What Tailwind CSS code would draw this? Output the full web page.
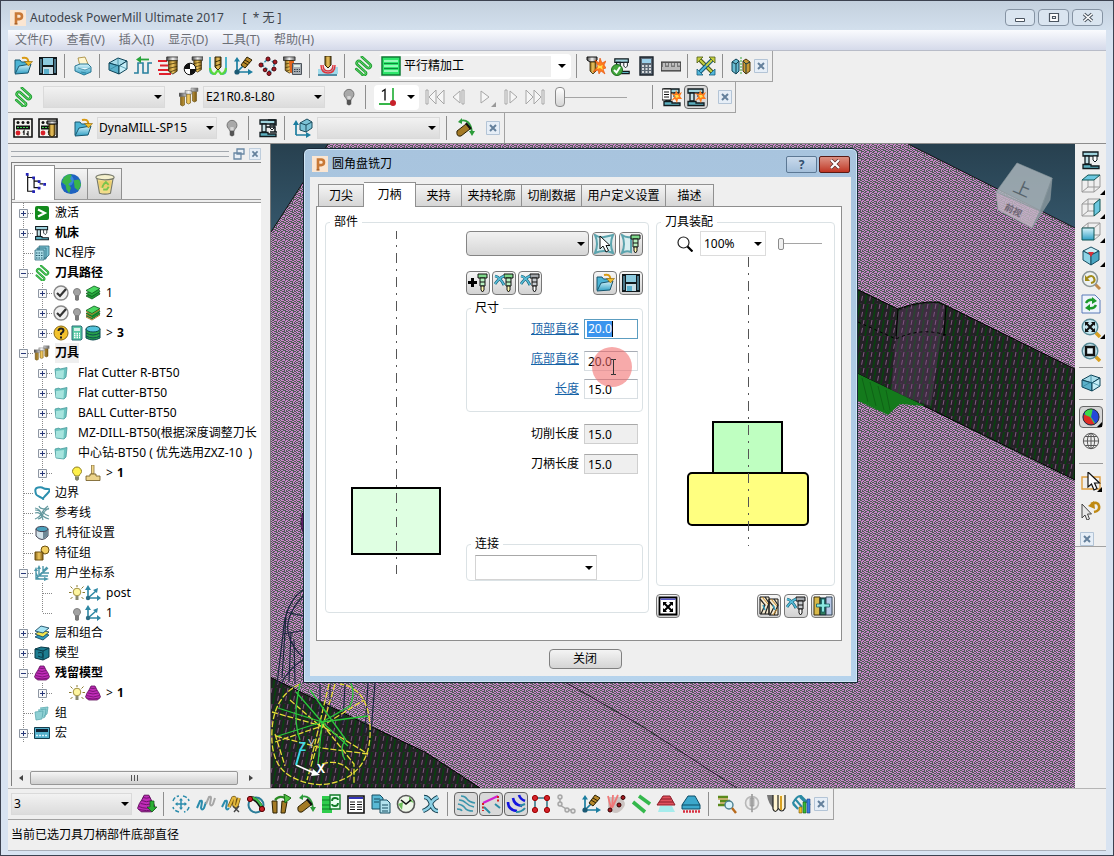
<!DOCTYPE html>
<html lang="zh-CN">
<head>
<meta charset="utf-8">
<title>Autodesk PowerMill Ultimate 2017</title>
<script src="https://cdn.jsdelivr.net/npm/@tailwindcss/browser@4"></script>
</head>
<body class="relative flex h-screen flex-col overflow-hidden border border-[#3c4250] bg-[#d8e3f1] font-['Noto_Sans','Noto_Sans_CJK_SC',sans-serif] text-xs text-black">

<svg class="absolute size-0" aria-hidden="true">
  <defs>
    <linearGradient id="blue" x1="0" y1="0" x2="0" y2="1"><stop offset="0" stop-color="#d8f4fb"/><stop offset="1" stop-color="#2f9fc4"/></linearGradient>
    <linearGradient id="gold" x1="0" y1="0" x2="1" y2="0"><stop offset="0" stop-color="#8a661a"/><stop offset=".5" stop-color="#f0c860"/><stop offset="1" stop-color="#7b5814"/></linearGradient>
    <linearGradient id="steel" x1="0" y1="0" x2="1" y2="0"><stop offset="0" stop-color="#444"/><stop offset=".5" stop-color="#f4f4f4"/><stop offset="1" stop-color="#666"/></linearGradient>
  </defs>
  <symbol id="i-p" viewBox="0 0 16 16"><path fill="#fbe6d2" d="M0 0h16v16H0z"/><path fill="none" stroke="#c87836" stroke-width="2.600" d="M6 14V3.500h3.200a2.800 2.800 0 0 1 0 5.600H6"/><path stroke="#8c4a18" d="M4.500 14h3"/></symbol>
  <symbol id="i-open" viewBox="0 0 20 20"><path fill="#4db4d4" stroke="#17566f" d="M2 17V4h5l1.500 2H14v4"/><path fill="url(#blue)" stroke="#17566f" d="M2 18l4-8 12-2-3 9z"/><path fill="none" stroke="#d99a12" stroke-width="2" d="M9 2c4-1 6 0 6.500 4"/><path fill="#f0bc28" stroke="#8a6208" stroke-width=".6" d="M11.500 5.500h8l-4 4.500z"/></symbol>
  <symbol id="i-save" viewBox="0 0 20 20"><path fill="#10181c" d="M1 1h18v18H1z"/><path fill="#8ccbe0" d="M5 2h10v7H5z"/><path fill="#c4dce6" d="M5 11h10v7H5z"/><path fill="#4a7688" d="M2 3h2v14H2zM16 3h2v14h-2z"/><path fill="#5ab0cc" d="M6 13h5v5H6z"/></symbol>
  <symbol id="i-print" viewBox="0 0 20 20"><path fill="#fff6cf" stroke="#a08330" stroke-width=".8" d="M5 2l7-1 3 7-8 2z"/><path fill="url(#blue)" stroke="#2a7894" d="M2 10l5-2h8l3 3v5l-7 3-9-4z"/><path fill="#e8f9ff" stroke="#2a7894" stroke-width=".7" d="M5 12l7 2 5-2M8 16l5 1"/></symbol>
  <symbol id="i-block" viewBox="0 0 20 20"><path fill="#a8dcea" stroke="#0d4357" d="M1 7l9-5 9 3-8 5z"/><path fill="#5ab0ca" stroke="#0d4357" d="M1 7l10 3v8L1 14z"/><path fill="#c6eef8" stroke="#0d4357" d="M11 10l8-5v8l-8 5z"/><path fill="none" stroke="#2d7c94" stroke-width=".7" d="M1 14l9-5 9 4M10 2v7"/></symbol>
  <symbol id="i-rapid" viewBox="0 0 20 20"><path fill="none" stroke="#28809e" stroke-width="1.600" d="M1 17h4V7h5v10h5V7h4"/><path fill="none" stroke="#28a43a" stroke-width="1.800" d="M16 3.500H6"/><path fill="#28a43a" d="M3 3.500l5-3.500v7z"/></symbol>
  <symbol id="i-tool" viewBox="0 0 20 20"><path fill="url(#steel)" stroke="#222" stroke-width=".8" d="M6 1h13v4H6z"/><path fill="url(#gold)" stroke="#2d2204" stroke-width=".8" d="M8 5h9v11l-4.500 3-4.500-3z"/><path stroke="#3d2f08" stroke-width=".8" d="M8 9l9-2M8 13l9-2M9 17l8-3"/></symbol>
  <symbol id="i-feed" viewBox="0 0 20 20"><path stroke="#e0202c" stroke-width="1.800" d="M0 5h9M2 9.500h8M0 14h11M1 18h12"/><use href="#i-tool" x="3" y="0" width="19" height="19"/></symbol>
  <symbol id="i-point" viewBox="0 0 20 20"><use href="#i-tool" x="4" y="0" width="17" height="17"/><circle cx="7" cy="13" r="5.800" fill="#fff" stroke="#111"/><path fill="#111" d="M7 13V7.200A5.800 5.800 0 0 0 1.200 13zM7 13v5.800a5.800 5.800 0 0 0 5.800-5.800z"/></symbol>
  <symbol id="i-lead" viewBox="0 0 20 20"><path fill="none" stroke="#3aaec8" stroke-width="1.800" d="M2 1v13q0 4 4 4M18 1v13q0 4-4 4"/><path fill="none" stroke="#58d83c" stroke-width="2.200" d="M2 12q1 6 5 6l3-4 3 4q4 0 5-6"/><path fill="url(#gold)" stroke="#2d2204" d="M7 1h6v10l-3 3-3-3z"/><path stroke="#3d2f08" d="M7 6l6-2M7 10l6-2"/></symbol>
  <symbol id="i-axis" viewBox="0 0 20 20"><path fill="none" stroke="#1c7ea0" stroke-width="1.700" d="M4 17V4M4 16h14M4 16l6-6"/><path fill="#1c7ea0" d="M1 5.500L4 1l3 4.500zM15 13l5 3-5 3z"/><circle cx="4" cy="16" r="2.600" fill="#1c5a74"/><path fill="#b8892a" stroke="#2d2204" d="M8 9l6-8 5 3-7 8z"/><path stroke="#2d2204" d="M10 6l5 3M12 4l5 3"/></symbol>
  <symbol id="i-chain" viewBox="0 0 20 20"><path fill="none" stroke="#3a9ab4" stroke-width="1.500" stroke-dasharray="3 1.500" d="M3 9l7-6 7 4-4 9-9-7"/><g fill="#a81820" stroke="#4a0810"><circle cx="10" cy="3" r="2"/><circle cx="17" cy="6" r="2"/><circle cx="3" cy="9" r="2"/><circle cx="16" cy="13" r="2"/><circle cx="11" cy="17.500" r="2"/><circle cx="7" cy="14" r="1.800"/></g></symbol>
  <symbol id="i-feedcalc" viewBox="0 0 20 20"><use href="#i-tool" x="-5" y="0" width="18" height="18"/><path fill="#e2641c" d="M6 5h5l-1 13-3-2z"/><path fill="#a7adb3" stroke="#4c535a" d="M9.500 7.500h9v11h-9z"/><path fill="#dfeee4" d="M11 9h6v2h-6z"/><path stroke="#39424a" stroke-dasharray="1.500 1" d="M11 13.500h6M11 15.500h6"/></symbol>
  <symbol id="i-collide" viewBox="0 0 20 20"><path fill="#9fdaea" d="M0 13h7q3 6 8-2h5v7H0z"/><path fill="none" stroke="#e0343c" stroke-width="1.400" d="M5 9q0 6 5 6t5-6M3 9q0 8 7 8t7-8"/><path fill="url(#gold)" stroke="#2d2204" d="M7 0h6v9l-3 3-3-3z"/><path stroke="#1c6e8c" stroke-width="1.500" d="M0 19h19"/></symbol>
  <symbol id="i-path" viewBox="0 0 20 20"><g fill="none" stroke-linecap="round" transform="rotate(42 10 10)"><path stroke="#1f9a32" stroke-width="2.600" d="M3 4h11a2.200 2.200 0 0 1 0 4.400H5a2.200 2.200 0 0 0 0 4.400h11M7 16.800h8a2 2 0 0 0 1-4"/><path stroke="#62de6a" stroke-width=".9" d="M3 4h11a2.200 2.200 0 0 1 0 4.400H5a2.200 2.200 0 0 0 0 4.400h11M7 16.800h8a2 2 0 0 0 1-4"/></g></symbol>
  <symbol id="i-raster" viewBox="0 0 20 20"><path fill="#2ee66c" stroke="#0f7c34" stroke-width="1.500" d="M1 1h18v18H1z"/><path fill="none" stroke="#b8ffd0" stroke-width="1.400" d="M3 5h14M3 10h14M3 15h14"/><path fill="none" stroke="#0c8a3a" d="M3 7.500h14M3 12.500h14"/></symbol>
  <symbol id="i-boom" viewBox="0 0 20 20"><path fill="url(#steel)" stroke="#111" d="M1 1h10v3L9 6H4L1 4z"/><path fill="url(#gold)" stroke="#2d2204" stroke-width=".8" d="M4 6h6v9l-3 3-3-3z"/><path fill="#ff7b1c" stroke="#e04c08" stroke-width=".6" d="M12 10L9 4l4 3 1-5 2 5 4-2-2 4 2 3-3 1 2 5-4-3-2 3-1-4-5 2z"/><path fill="#ffe04c" d="M12 9l2 1 3-1-1 2 1 3-3-2-3 1 1-2z"/></symbol>
  <symbol id="i-machine" viewBox="0 0 20 20"><path fill="#9fd3dd" stroke="#101a1e" stroke-width="1.300" d="M2 2h15v4H2z"/><path fill="#c8e4ea" stroke="#101a1e" stroke-width="1.300" d="M4 6h4v8H4z"/><path fill="#fff" stroke="#101a1e" d="M12 6h4v4l-2 2-2-2z"/><path fill="#5cb0c0" stroke="#101a1e" stroke-width="1.300" d="M2 18.500v-4h8v1.500h8v2.500z"/></symbol>
  <symbol id="i-machok" viewBox="0 0 20 20"><use href="#i-machine" x="2" width="18" height="20"/><circle cx="6" cy="14" r="5.500" fill="#42a83c" stroke="#1e6a1c"/><path fill="none" stroke="#fff" stroke-width="2" d="M3 14l2.500 2.500L9 11"/></symbol>
  <symbol id="i-calc" viewBox="0 0 20 20"><path fill="#5c6874" stroke="#1c242c" stroke-width="1.400" d="M4 1h13v18H4z"/><path fill="#9bd0ea" d="M6 3h9v4H6z"/><path stroke="#fff" stroke-width="1.700" stroke-dasharray="2 1.500" d="M6 10h9M6 13h9M6 16h9"/></symbol>
  <symbol id="i-ruler" viewBox="0 0 20 20"><path fill="#777" stroke="#333" d="M0 6h20v9H0z"/><path fill="#b9b9b9" d="M1 11h18v3H1z"/><path stroke="#eee" stroke-width="1.200" d="M3 7v4M6 7v2.500M9 7v4M12 7v2.500M15 7v4M18 7v2.500"/></symbol>
  <symbol id="i-cross" viewBox="0 0 20 20"><path stroke="#4b5a18" stroke-width="4" d="M4 4l12 12"/><path stroke="#c6d040" stroke-width="2" d="M3 3l14 14"/><path stroke="#155a78" stroke-width="4" d="M16 4L4 16"/><path stroke="#53b8dc" stroke-width="2" d="M10 10l-7 7"/><path stroke="#c6d040" stroke-width="2" d="M17 3l-7 7"/><path fill="#c6d040" stroke="#4b5a18" stroke-width=".8" d="M1 1h6L1 7zM19 1v6l-6-6z"/><path fill="#53b8dc" stroke="#155a78" stroke-width=".8" d="M1 19v-6l6 6zM19 19h-6l6-6z"/></symbol>
  <symbol id="i-mirror" viewBox="0 0 20 20"><path fill="#69bcd2" stroke="#0d4357" d="M1 6l4-3 3 2v10l-3 3-4-3z"/><path fill="#c99a34" stroke="#4c360a" d="M12 5l3-2 4 3v9l-4 3-3-3z"/><path fill="none" stroke="#173b46" d="M5 8v9M1 6l4 2 3-3M15 8v9M12 5l3 3 4-2"/><path stroke="#37a83c" stroke-dasharray="2 1" d="M10 1v18"/></symbol>
  <symbol id="i-bulb" viewBox="0 0 20 20"><path fill="#a9a9a9" stroke="#6d6d6d" d="M7.500 13C7 11 4.500 10 4.500 7a5.500 5.500 0 0 1 11 0c0 3-2.500 4-3 6z"/><path fill="#555" d="M7.500 13h5v5l-2.500 1.500L7.500 18z"/><path stroke="#fff" d="M9 13V9M11 13V9"/></symbol>
  <symbol id="i-bulbsm" viewBox="0 0 16 16"><path fill="#a2a2a2" stroke="#808080" d="M6 10.500C5.500 9 4.500 8.500 4.500 7a3.500 3.500 0 0 1 7 0c0 1.500-1 2-1.500 3.500z"/><path fill="#7a7a7a" d="M6 11h4v4l-2 1-2-1z"/></symbol>
  <symbol id="i-bulbon" viewBox="0 0 16 16"><path fill="#fff04a" stroke="#8d7d20" d="M6 11C5.500 9 3.500 8.500 3.500 6.500a4.500 4.500 0 0 1 9 0c0 2-2 2.500-2.500 4.500z"/><path fill="#85856c" d="M6 11.500h4v3L8 16l-2-1.500z"/></symbol>
  <symbol id="i-sun" viewBox="0 0 16 16"><path stroke="#8a7a30" d="M8 0v2M1.500 1.500l2 2M14.500 1.500l-2 2M0 7.500h2.500M13.500 7.500H16M1.500 14l2-2M14.500 14l-2-2"/><circle cx="8" cy="7" r="3.800" fill="#fff6a0" stroke="#a09040"/><path fill="#8a8a70" d="M6.500 11h3v4h-3z"/></symbol>
  <symbol id="i-tools3" viewBox="0 0 20 20"><g fill="url(#gold)" stroke="#6c500f" stroke-width=".6"><path d="M1.500 9h4v9L3.500 19l-2-1zM7.500 7h4v9l-2 1-2-1zM13.500 4h4v10l-2 1-2-1z"/></g><g fill="url(#steel)" stroke="#777" stroke-width=".5"><path d="M0 6h7v3.500H0zM6 3.500h7V7H6zM12 1h7v3.500h-7z"/></g></symbol>
  <symbol id="i-one" viewBox="0 0 20 20"><path fill="none" stroke="#35b648" stroke-width="1.800" d="M15 1v16H1"/><circle cx="15" cy="16" r="3" fill="#c8202a"/><path fill="none" stroke="#111" stroke-width="1.400" d="M4 4.500L7 2.500v11"/></symbol>
  <symbol id="i-ctl" viewBox="0 0 20 20"><path fill="#f3f3ee" stroke="#111" stroke-width="1.600" d="M1 1h18v18H1z"/><g fill="#111"><circle cx="5" cy="4.500" r="1.500"/><circle cx="10" cy="4.500" r="1.500"/><circle cx="15" cy="4.500" r="1.500"/><path d="M3 7.500h14v4H3z"/></g><path stroke="#3bd04c" stroke-dasharray="2 1" d="M4 9.500h12"/><circle cx="5" cy="15" r="2.400" fill="#d82028"/><path fill="none" stroke="#111" stroke-width="1.200" d="M11 17v-4l-1 1.500M15 13v4l-1.500-1.500"/></symbol>
  <symbol id="i-ctltool" viewBox="0 0 20 20"><use href="#i-ctl"/><path fill="url(#gold)" stroke="#2d2204" d="M11 6h6v11l-3 2-3-2z"/><path fill="url(#steel)" stroke="#111" d="M9 3h10v3H9z"/></symbol>
  <symbol id="i-mach2" viewBox="0 0 20 20"><use href="#i-machine"/><path fill="none" stroke="#101a1e" stroke-width="1.500" d="M10 2h8v5h-6M8 9h9v5M12 14h7"/></symbol>
  <symbol id="i-wpbox" viewBox="0 0 20 20"><path fill="none" stroke="#1c7ea0" stroke-width="1.700" d="M3 17V6M3 17h12"/><path fill="#1c7ea0" d="M0 7l3-5 3 5zM13 14l5 3-5 3z"/><path fill="#7cc3d6" stroke="#1d4d5e" d="M7 5l7-4 5 3v6l-6 4-6-2z"/><path fill="none" stroke="#1d4d5e" d="M7 5l6 2 6-3M13 7v7"/></symbol>
  <symbol id="i-rot" viewBox="0 0 20 20"><path fill="none" stroke="#2c9c3a" stroke-width="1.800" d="M5 3q10-3 12 11"/><path fill="#2c9c3a" d="M3 4l4-4v6zM14 13l6 0-3 5z"/><path fill="#a47a26" stroke="#2d2204" d="M2 13l9-7 4 5-9 7q-5 1-4-5z"/><path stroke="#111" stroke-width="2" d="M11 5l5 6"/></symbol>
  <symbol id="i-boommach" viewBox="0 0 20 20"><use href="#i-machine"/><path fill="#ff7b1c" d="M13 9L8 6l5 1 1-4 2 4 4-2-2 4 2 3-4 0-1 4-2-4-4 2z"/><path fill="#ffe04c" d="M13 8l3 0 1 2-3 1z"/></symbol>
  <symbol id="i-listmach" viewBox="0 0 20 20"><use href="#i-boommach"/><path fill="#fff" stroke="#111" d="M0 2h9v11H0z"/><path stroke="#111" d="M2 5h5M2 7.500h5M2 10h5"/></symbol>
  <symbol id="i-first" viewBox="0 0 20 20"><path fill="#f6f6f6" stroke="#a6a6a6" d="M1 3h2v14H1zM11 3v14l-7-7zM19 3v14l-7-7z"/></symbol>
  <symbol id="i-prev" viewBox="0 0 20 20"><path fill="#f6f6f6" stroke="#a6a6a6" d="M11 4v12l-7-6zM13 3h2v14h-2z"/></symbol>
  <symbol id="i-play" viewBox="0 0 20 20"><path fill="#f6f6f6" stroke="#a6a6a6" d="M4 4v12l8-6z"/><path fill="#999" d="M19 15v5h-5z"/></symbol>
  <symbol id="i-next" viewBox="0 0 20 20"><path fill="#f6f6f6" stroke="#a6a6a6" d="M9 4v12l7-6zM4 3h2v14H4z"/></symbol>
  <symbol id="i-last" viewBox="0 0 20 20"><path fill="#f6f6f6" stroke="#a6a6a6" d="M17 3h2v14h-2zM9 3v14l7-7zM1 3v14l7-7z"/></symbol>
  <symbol id="i-x" viewBox="0 0 14 14"><path fill="#e6eef7" stroke="#b3c4d6" d="M.5 .5h13v13H.5z"/><path stroke="#64809c" stroke-width="2" d="M4 4l6 6M10 4l-6 6"/></symbol>
  <symbol id="i-tree" viewBox="0 0 24 24"><path fill="none" stroke="#111" stroke-width="1.300" d="M4 3v18h7M4 6h7v11h6M11 10h6M17 13h4"/><g fill="#2424b8"><path d="M2 1h3v3H2zM9 5h3v3H9zM15 9h3v3h-3zM21 12h3v3h-3zM15 16h3v3h-3zM9 20h3v3H9z"/></g></symbol>
  <symbol id="i-globe" viewBox="0 0 24 24"><circle cx="12" cy="12" r="11" fill="#1e62c0"/><circle cx="9" cy="8" r="6" fill="#4aa4e8" opacity=".6"/><path fill="#3ab54a" d="M4 5q5-5 9-3l-2 4 2 3-4 3 3 4-2 6-3-4-1-5-4-3zM15 8l6-1 2 6-3 6-4-3z"/></symbol>
  <symbol id="i-bin" viewBox="0 0 24 24"><path fill="#f2dc8a" stroke="#77796a" stroke-width="1.200" d="M3 5h18l-3 17q-6 2-12 0z"/><path fill="#e6c04c" d="M5 9h14l-1 7H6z" opacity=".5"/><ellipse cx="12" cy="4.500" rx="10" ry="3" fill="#f4f0cc" stroke="#77796a" stroke-width="1.200"/><path fill="none" stroke="#79c44c" stroke-width="2" d="M10 13l3-3 3 3M16 15l-2 3h-4M9 16l1-3"/></symbol>
  <!-- tree connector cells -->
  <symbol id="t-v" viewBox="0 0 20 20"><path stroke="#888" stroke-dasharray="1 1" d="M9.500 0v20"/></symbol>
  <symbol id="t-t" viewBox="0 0 20 20"><path stroke="#888" stroke-dasharray="1 1" d="M9.500 0v20M10 10.500h10"/></symbol>
  <symbol id="t-l" viewBox="0 0 20 20"><path stroke="#888" stroke-dasharray="1 1" d="M9.500 0v10M10 10.500h10"/></symbol>
  <symbol id="t-plus" viewBox="0 0 20 20"><use href="#t-t"/><path fill="#f6f7f9" stroke="#8e96a2" d="M5.500 6.500h8v8h-8z"/><path stroke="#283878" d="M7 10.500h5M9.500 8v5"/></symbol>
  <symbol id="t-minus" viewBox="0 0 20 20"><use href="#t-t"/><path fill="#f6f7f9" stroke="#8e96a2" d="M5.500 6.500h8v8h-8z"/><path stroke="#283878" d="M7 10.500h5"/></symbol>
  <symbol id="i-active" viewBox="0 0 16 16"><rect x="1" y="1" width="14" height="14" rx="2" fill="#128a1c"/><path fill="none" stroke="#fff" stroke-width="2" d="M4 4.500L11 8l-7 3.500"/></symbol>
  <symbol id="i-nc" viewBox="0 0 16 16"><path fill="#7cc3d4" stroke="#2d6a7c" stroke-width=".8" d="M5 1h10v9l-3 3H5zM3 3h9v11H3z"/><path fill="#a9dbe6" stroke="#2d6a7c" stroke-width=".8" d="M1 5h9v10H1z"/><path stroke="#23596a" stroke-dasharray="1.500 1" d="M2 8h7M2 10.500h7M2 13h7"/></symbol>
  <symbol id="i-check" viewBox="0 0 16 16"><circle cx="8" cy="8" r="7" fill="#f0f0f0" stroke="#888" stroke-width="1.400"/><path fill="none" stroke="#333" stroke-width="2.200" d="M4 8l3 3 6-7"/></symbol>
  <symbol id="i-layers" viewBox="0 0 16 16"><g stroke="#0b5a1c" stroke-width=".8"><path fill="#1e9a34" d="M1 11l6 3 8-5-2-3-6 2z"/><path fill="#28a83e" d="M1 8.500l6 3 8-5-2-3-6 2z"/><path fill="#4cd862" d="M1 5.500l6 3 8-5L9 1z"/></g></symbol>
  <symbol id="i-layers2" viewBox="0 0 16 16"><use href="#i-layers"/><path fill="none" stroke="#b87c2c" d="M1 6.500l6 3 8-5M1 12l6 3 8-5M1 9.500l6 3"/></symbol>
  <symbol id="i-q" viewBox="0 0 16 16"><circle cx="8" cy="8" r="7" fill="#f3c22c" stroke="#8a6a10"/><path fill="none" stroke="#222" stroke-width="2" d="M5.500 6q0-2.500 2.500-2.500t2.500 2.200Q10.500 7 8 8.500V10M8 11.500v2"/></symbol>
  <symbol id="i-pda" viewBox="0 0 16 16"><path fill="#59c8a4" stroke="#2b6e78" d="M3 1h9l1 1v12l-1 1H3z"/><path fill="#d8f2ea" d="M5 3h6v3H5z"/><path stroke="#fff" stroke-dasharray="1.500 1" stroke-width="1.300" d="M5 8.500h6M5 10.500h6M5 12.500h6"/></symbol>
  <symbol id="i-db" viewBox="0 0 16 16"><path fill="#27a04a" stroke="#0b4a50" d="M1 4v9q7 4 14 0V4z"/><path fill="none" stroke="#0b4a50" d="M1 8q7 4 14 0M1 11q7 4 14 0"/><ellipse cx="8" cy="4" rx="7" ry="3" fill="#54c3dc" stroke="#0b4a50"/></symbol>
  <symbol id="i-folder" viewBox="0 0 16 16"><path fill="#6cc4c0" stroke="#4a9a9c" stroke-width=".8" d="M2 4l4-1 1 1 7-1.500-1 9.500-2 2-8-1z"/><path fill="#a6e4de" d="M3 6l8-1-.5 8.500L3 12.500z"/></symbol>
  <symbol id="i-disc" viewBox="0 0 16 16"><path fill="#f2d98a" stroke="#8d7540" stroke-width=".8" d="M6.500 0h2.500v9H6.500z"/><path fill="#ecd48c" stroke="#6d5520" stroke-width=".8" d="M5 9h6v2h4v4.500H1V11h4z"/></symbol>
  <symbol id="i-bound" viewBox="0 0 16 16"><path fill="none" stroke="#2b8fae" stroke-width="2" d="M2 9Q0 3 4 2.500T9 3t5 1-1 5-4 5-3-2-4-3z"/></symbol>
  <symbol id="i-pattern" viewBox="0 0 16 16"><g fill="none" stroke="#64989e" stroke-width="1.200"><path d="M1 3q5 1 6 5t8 6M14 1q-4 3-6 7t-7 6M5 1q1 4 10 3M1 8q6-2 8 7M1 5q5 0 6 3M15 3q-4 2-6 6M4 14q4-1 5-5M15 11q-4-1-7-5"/></g></symbol>
  <symbol id="i-hole" viewBox="0 0 16 16"><path fill="#d4e3ea" stroke="#445" d="M2 4v7q6 7 12 0V4z"/><path fill="#6f8896" d="M9 6l5-1v6l-5 3z"/><ellipse cx="8" cy="4" rx="6" ry="2.600" fill="#4aa0bc" stroke="#445"/></symbol>
  <symbol id="i-feat" viewBox="0 0 16 16"><circle cx="11" cy="5" r="4" fill="#f2cf62" stroke="#6d5010"/><path fill="url(#gold)" stroke="#6d5010" d="M1 7h8v8H1z"/></symbol>
  <symbol id="i-wps" viewBox="0 0 16 16"><g fill="none" stroke="#4c97a9" stroke-width="1.400"><path d="M2 5v9h9M5 2v9h9M9 1v7h6M2 14L13 2M5 11l9-8M2 8l3 6"/></g><path fill="#4c97a9" d="M0 6l2-4 2 4zM3 4l2-4 2 4zM10 12l5 2-5 2z"/></symbol>
  <symbol id="i-wp" viewBox="0 0 16 16"><path fill="none" stroke="#2f88a4" stroke-width="1.600" d="M3 13V3M3 13h11M3 13l8-7"/><path fill="#2f88a4" d="M0 5l3-5 3 5zM12 10l4 3-4 3zM8 5l5-2-1 5z"/><circle cx="3" cy="13" r="2.200" fill="#2f6d84"/></symbol>
  <symbol id="i-levels" viewBox="0 0 16 16"><g stroke="#1c4c64" stroke-width=".9"><path fill="#2e9cc0" d="M1 12l6-4 8 2-6 5z"/><path fill="#f2e34c" d="M1 9l6-4 8 2-6 5z"/><path fill="#a6e4f4" d="M1 6l6-5 8 2-6 5z"/></g></symbol>
  <symbol id="i-model" viewBox="0 0 16 16"><path fill="#1c7c90" stroke="#0a3a48" d="M1 4l6-2 8 1v9l-6 3-8-2z"/><path fill="none" stroke="#0a3a48" d="M1 4l8 2v9M9 6l6-3M4 8q4-2 5 2t-5 1"/></symbol>
  <symbol id="i-stock" viewBox="0 0 16 16"><path fill="#c02cb8" stroke="#5c0c58" stroke-width=".8" d="M6 1h4l2 4 2 3 1.500 4-3 3h-9l-3-3L2 8l2-3z"/><path fill="none" stroke="#6c1068" stroke-width=".8" d="M5 3q3 1 6 0M4 5.500q4 2 8 0M3 8q5 2 10 0M1.500 10.500q7 3 13 0M1 13q7 2 14 0"/></symbol>
  <symbol id="i-group" viewBox="0 0 16 16"><path fill="#8fd0d4" stroke="#5caab0" stroke-width=".8" d="M6 3l8-1-1 7-3 2M4 5l8-1-1 8-2 1M1 7l8-1-1 8-6 1z"/></symbol>
  <symbol id="i-macro" viewBox="0 0 16 16"><path fill="#54b0cc" stroke="#143c4c" d="M.5 2.500h15v11H.5z"/><path fill="#123" d="M2 4h12v3H2z"/><path stroke="#d8f4ff" stroke-width="1.400" stroke-dasharray="2 1" d="M2 10.500h12"/></symbol>
  <!-- bottom toolbar -->
  <symbol id="b-stock" viewBox="0 0 20 20"><use href="#i-stock" width="19" height="19"/><path fill="#2cae34" stroke="#0b5c14" stroke-width=".7" d="M13 7h4v6h3l-5 5-5-5h3z"/></symbol>
  <symbol id="b-move" viewBox="0 0 20 20"><g fill="none" stroke="#2b8cac" stroke-width="1.500"><path d="M10 5v10M5 10h10"/><path stroke-dasharray="4 2" d="M2 7q2-5 6-5M12 2q5 1 6 5M18 13q-1 4-5 5M8 18q-5-1-6-5"/></g><path fill="#2b8cac" d="M8 6.500L10 4l2 2.500zM8 13.500l2 2.500 2-2.500zM6.500 8L4 10l2.500 2zM13.500 8l2.500 2-2.500 2z"/></symbol>
  <symbol id="b-wave" viewBox="0 0 20 20"><g fill="none" stroke-width="2"><path stroke="#2b8cac" d="M1 14l3-7q2-1 2 1l-1 6q1 3 3 0l2-6"/><path stroke="#a6a6a6" d="M10 10l3-7q2-1 2 1l-1 6q1 3 3 0l2-6"/></g></symbol>
  <symbol id="b-cut" viewBox="0 0 20 20"><g fill="none" stroke-width="2"><path stroke="#2b8cac" d="M1 13l3-6q2-1 2 1l-1 6q1 3 3 0"/><path stroke="#6d5010" stroke-width="3.600" d="M8 13l4-9q2-1 2 1l-1 6q1 3 3 0l2-7"/><path stroke="#e4b83c" stroke-width="2.200" d="M8 13l4-9q2-1 2 1l-1 6q1 3 3 0l2-7"/></g><path stroke="#444" stroke-width="1.400" d="M12 12l6 6M18 12l-5 6"/></symbol>
  <symbol id="b-reorder" viewBox="0 0 20 20"><circle cx="10" cy="11" r="7.500" fill="none" stroke="#2b7c98" stroke-width="2"/><path fill="none" stroke="#111" stroke-width="4" d="M4 4q6-1 12 10"/><path fill="none" stroke="#3cb848" stroke-width="2.400" d="M5 4q6-1 11 9"/><circle cx="4" cy="5" r="2.600" fill="#c8202a" stroke="#500"/><circle cx="16" cy="15" r="2.600" fill="#c8202a" stroke="#500"/></symbol>
  <symbol id="b-transf" viewBox="0 0 20 20"><path fill="#a47a26" stroke="#2d2204" d="M1 7h5v12H2zM11 7l5 1-2 11h-4z"/><path fill="none" stroke="#2a8a24" stroke-width="2.200" d="M4 6q4-5 10-2"/><path fill="#4cc040" stroke="#1c6a18" d="M13 0l7 4-6 5z"/></symbol>
  <symbol id="b-swap" viewBox="0 0 20 20"><path fill="#2ecc4c" d="M1 2h10v17H1z"/><path stroke="#0d7c24" d="M1 6h10M1 11h10M1 15h10"/><path fill="#e8fff0" stroke="#127c28" stroke-width="1.400" d="M9 1h10v14H9z"/><path fill="none" stroke="#127c28" stroke-width="1.800" d="M11 7q0-3 3-3t3 2M17 9q0 3-3 3t-3-2"/></symbol>
  <symbol id="b-table" viewBox="0 0 20 20"><path fill="#fff" stroke="#111" stroke-width="1.600" d="M2 2h16v17H2z"/><path fill="#3434b8" d="M3 3h14v2H3z"/><path stroke="#111" stroke-width="1.200" stroke-dasharray="5 2" d="M4 8h12M4 10.500h12M4 13h12M4 15.500h12"/></symbol>
  <symbol id="b-copy" viewBox="0 0 20 20"><path fill="#59b8d4" stroke="#174c60" d="M1 1h8l3 3v11H1z"/><path fill="#b2e2ee" stroke="#174c60" d="M9 6h7l3 3v10H9z"/><path stroke="#174c60" d="M3 5h6M3 8h5M11 11h6M11 14h6M11 17h6"/></symbol>
  <symbol id="b-clock" viewBox="0 0 20 20"><circle cx="10" cy="10" r="8.500" fill="#eef6e8" stroke="#555" stroke-width="1.600"/><path fill="#6fbe5c" d="M2 10l5-2-1 8zM13 2l5 7-5-2z"/><path fill="none" stroke="#111" stroke-width="1.600" d="M5 6l5 4 5-4"/></symbol>
  <symbol id="b-del" viewBox="0 0 20 20"><path fill="none" stroke="#123c4c" stroke-width="4.500" d="M3 3q5 0 7 7t7 7M17 3q-6 3-7 7t-8 7"/><path fill="none" stroke="#8cd0e4" stroke-width="2.600" d="M3 3q5 0 7 7t7 7M17 3q-6 3-7 7t-8 7"/></symbol>
  <symbol id="b-l1" viewBox="0 0 20 20"><g fill="none" stroke="#3b95ac" stroke-width="1.500"><path d="M5 2q4 0 6 3t8 4M3 6q4 0 7 3t8 4M2 10q5 1 7 4t8 3M1 15q4 0 5 2"/></g></symbol>
  <symbol id="b-l2" viewBox="0 0 20 20"><path fill="none" stroke="#d020d0" stroke-width="2.200" d="M2 9l15-7"/><path stroke="#d82020" stroke-width="2" stroke-dasharray="2 1.500" d="M2 9v8M17 2v7"/><path stroke="#2b8ba4" stroke-width="2" d="M3 13l6 6M14 10l5 4"/></symbol>
  <symbol id="b-l3" viewBox="0 0 20 20"><g fill="none" stroke="#1414e0" stroke-width="2.600"><path d="M2 8q0 8 9 9M7 4q1 7 9 8M13 1q1 4 6 6"/></g><path fill="none" stroke="#2b8ba4" stroke-width="2" d="M10 18q6 0 9-4M14 12l5-2"/></symbol>
  <symbol id="b-sq" viewBox="0 0 20 20"><path fill="none" stroke="#3a7888" stroke-width="1.600" d="M4 17V4M16 4v13M4 4h12"/><g fill="#d42028" stroke="#900"><circle cx="4" cy="4" r="2.600"/><circle cx="16" cy="4" r="2.600"/><circle cx="4" cy="16" r="2.600"/><circle cx="16" cy="16" r="2.600"/></g></symbol>
  <symbol id="b-gchain" viewBox="0 0 20 20"><g fill="#e2e2e2" stroke="#a5a5a5" stroke-width="1.400"><path fill="none" d="M4 3v8l8 5h6"/><circle cx="4" cy="3" r="2"/><circle cx="4" cy="10" r="2"/><circle cx="11" cy="16" r="2"/><circle cx="17" cy="17" r="2"/></g></symbol>
  <symbol id="b-pts" viewBox="0 0 20 20"><path fill="#cbc4c2" d="M2 3h12q7 5 4 10-4 6-9 6-6-1-7-6z"/><path stroke="#f07878" stroke-width="1.800" d="M2 2l3 12M7 1l-1 13M12 1L6 14"/><g fill="#a41820" stroke="#300"><circle cx="17" cy="3.500" r="2"/><circle cx="13" cy="11" r="2"/><circle cx="4" cy="16" r="2"/></g></symbol>
  <symbol id="b-green" viewBox="0 0 20 20"><path stroke="#34b84c" stroke-width="3.600" d="M8 2l11 8M2 8l12 10"/></symbol>
  <symbol id="b-red" viewBox="0 0 20 20"><path fill="#e0505c" stroke="#8a1c28" d="M7 2h7l5 9H1z"/><path stroke="#8a1c28" d="M5 5h10M3 8h14"/><path fill="#a6ecec" d="M4 12h12l3 6H2z"/></symbol>
  <symbol id="b-blue" viewBox="0 0 20 20"><path fill="#3ca8cc" stroke="#0d4c66" d="M7 2h7l5 9v4H1v-4z"/><path fill="none" stroke="#0d4c66" d="M1 11h18"/><path stroke="#d83040" stroke-width="2.500" stroke-dasharray="2 1" d="M2 17.500h17"/></symbol>
  <symbol id="b-find" viewBox="0 0 20 20"><path stroke="#5a8a1c" stroke-width="2.400" d="M1 3h10M3 7h10M1 11h9"/><path stroke="#b88a1c" stroke-width="1.200" d="M1 5h10M3 9h8"/><circle cx="12" cy="11" r="4" fill="#d8f2fa" stroke="#4c8090" stroke-width="1.400"/><path stroke="#b86a1c" stroke-width="2.400" d="M15 14l4 5"/></symbol>
  <symbol id="b-gray" viewBox="0 0 20 20"><circle cx="10" cy="9" r="6.500" fill="#ececec" stroke="#b8b8b8" stroke-width="1.600"/><path fill="#bcbcbc" stroke="#909090" stroke-width=".6" d="M9.500 0h1v18h-1zM8 4h4v8H8z"/></symbol>
  <symbol id="b-tip" viewBox="0 0 20 20"><path fill="#777" d="M0 1h8v15Q1 10 0 1z"/><path fill="#fff4d0" stroke="#222" stroke-width="1.200" d="M6 1v14q2 5 5 0V1M11 1v13q4 6 7 0V1"/><path stroke="#d8a020" stroke-width="2" d="M14 2v14"/></symbol>
  <symbol id="b-stat" viewBox="0 0 20 20"><g fill="none" stroke="#2b8ba4" stroke-width="2"><path d="M1 10l5 5M4 6l6 7M8 3l6 6M6 15L1 9q4-8 8-7l9 9"/></g><path fill="#f2c020" stroke="#6d5010" stroke-width=".6" d="M7 13h3v6H7z"/><path fill="#38b838" stroke="#145c14" stroke-width=".6" d="M11 8h3v11h-3z"/><path fill="#3a7ae0" stroke="#143c7c" stroke-width=".6" d="M15 5h3v14h-3z"/></symbol>
  <!-- view toolbar -->
  <symbol id="v-top" viewBox="0 0 20 20"><path fill="none" stroke="#999" d="M1 6v12h12V6M13 18l6-5V1M7 1v12h12M7 13l-6 5"/><path fill="#6cc8e0" stroke="#155" d="M1 6l6-5h12l-6 5z"/></symbol>
  <symbol id="v-right" viewBox="0 0 20 20"><path fill="none" stroke="#999" d="M1 6l6-5h12l-6 5zM1 6v12h12M7 1v12h12M7 13l-6 5"/><path fill="#6cc8e0" stroke="#155" d="M13 6l6-5v12l-6 5z"/></symbol>
  <symbol id="v-front" viewBox="0 0 20 20"><path fill="none" stroke="#999" d="M1 6l6-5h12l-6 5zM13 18l6-5V1M7 1v12h12"/><path fill="url(#blue)" stroke="#155" d="M1 6h12v12H1z"/></symbol>
  <symbol id="v-iso" viewBox="0 0 20 20"><path fill="#c8eef6" stroke="#164c60" d="M2 5l8-4 8 4-8 4z"/><path fill="#8fd4e6" stroke="#164c60" d="M2 5l8 4v10l-8-5z"/><path fill="#4aa8c4" stroke="#164c60" d="M18 5l-8 4v10l8-5z"/><path fill="#d83038" d="M7 6h6l-3 5z"/></symbol>
  <symbol id="v-last" viewBox="0 0 20 20"><path stroke="#c08a4c" stroke-width="3" d="M14 14l5 5"/><circle cx="9" cy="9" r="7.500" fill="#eef2f2" stroke="#8c9698" stroke-width="1.600"/><path fill="none" stroke="#a08a18" stroke-width="2.200" d="M6 8q5-4 7 0t-3 5"/><path fill="#a08a18" d="M4 5v6h5z"/></symbol>
  <symbol id="v-refresh" viewBox="0 0 20 20"><path fill="#eef4fc" stroke="#5a7ab8" d="M1 1h13l5 5v13H1z"/><path fill="none" stroke="#1c9a2c" stroke-width="2.400" d="M5 9q2-4 7-3M15 11q-2 4-7 3"/><path fill="#1c9a2c" d="M11 3l5 4-5 3zM9 10l-5 4 5 3z"/></symbol>
  <symbol id="v-fit" viewBox="0 0 20 20"><path stroke="#d8a020" stroke-width="3.400" d="M13 13l6 6"/><circle cx="9" cy="9" r="7.800" fill="#c6e8f0" stroke="#5a8c98" stroke-width="1.400"/><path stroke="#111" stroke-width="2" d="M5 5l8 8M13 5l-8 8"/><path fill="#111" d="M4 4h4L4 8zM14 4v4l-4-4zM4 14v-4l4 4zM14 14h-4l4-4z"/></symbol>
  <symbol id="v-box" viewBox="0 0 20 20"><path stroke="#d8a020" stroke-width="3.400" d="M13 13l6 6"/><circle cx="9" cy="9" r="7.800" fill="#c6e8f0" stroke="#5a8c98" stroke-width="1.400"/><path fill="#e8f6fa" stroke="#111" stroke-width="2.400" d="M5 5h8v8H5z"/></symbol>
  <symbol id="v-shade" viewBox="0 0 20 20"><circle cx="10" cy="10" r="9" fill="#2448d8"/><path fill="#3cd848" d="M10 10l5 7.500Q3 15 3 4q4-4 9-3z"/><path fill="#e02c24" d="M9 10l5 8q-8 2-12-4L1.500 7z"/><circle cx="10" cy="10" r="9" fill="none" stroke="#222"/></symbol>
  <symbol id="v-wire" viewBox="0 0 20 20"><g fill="none" stroke="#555" stroke-width="1.100"><circle cx="10" cy="10" r="8.500"/><ellipse cx="10" cy="10" rx="4" ry="8.500"/><path d="M10 1v18M2 10h16M3.500 5h13M3.500 15h13"/></g></symbol>
  <symbol id="v-sel" viewBox="0 0 20 20"><path fill="none" stroke="#e0a040" stroke-width="1.400" d="M1 5h18v12H1z"/><path fill="#fff" stroke="#111" stroke-width="1.200" d="M7 0v15l3.500-3 2.500 6 3-1.500-2.500-5.500h5z"/></symbol>
  <symbol id="v-undo" viewBox="0 0 20 20"><path fill="#e8e8e8" stroke="#444" d="M1 4v14l3-3 2 5 2.500-1-2-5h4z"/><path fill="none" stroke="#c08a14" stroke-width="2.600" d="M10 4q7-3 8 2t-5 6"/><path fill="#c08a14" d="M7 6l6-5 1 8z"/></symbol>
  <!-- dialog -->
  <symbol id="d-shank" viewBox="0 0 20 20"><g stroke="#111"><path fill="#7fd88a" d="M10 1h9v4h-9z"/><path fill="#b8f0c0" d="M12 5h5v8h-5z"/><path fill="#fff9b0" d="M13 13h3v4l-1.500 2-1.500-2z"/><path d="M12 9h5"/></g></symbol>
  <symbol id="d-gray" viewBox="0 0 20 20"><g stroke="#111"><path fill="#a4a8ac" d="M10 1h9v4h-9z"/><path fill="#c8ccd0" d="M12 5h5v8h-5z"/><path fill="#fff" d="M13 13h3v4l-1.500 2-1.500-2z"/><path d="M12 9h5"/></g></symbol>
  <symbol id="d-x" viewBox="0 0 20 20"><path fill="none" stroke="#155a70" stroke-width="2.800" d="M1 3q5 1 9 9M10 3q-5 2-9 8"/><path fill="none" stroke="#54bcd8" stroke-width="1.600" d="M1 3q5 1 9 9M10 3q-5 2-9 8"/></symbol>
  <symbol id="d-add" viewBox="0 0 20 20"><path fill="#000" d="M3 5h3v3h3v3H6v3H3v-3H0V8h3z"/><use href="#d-shank"/></symbol>
  <symbol id="d-del" viewBox="0 0 20 20"><use href="#d-shank"/><use href="#d-x"/></symbol>
  <symbol id="d-clr" viewBox="0 0 20 20"><use href="#d-gray"/><use href="#d-x"/></symbol>
  <symbol id="d-pick" viewBox="0 0 20 20"><path fill="#d8eef0" stroke="#5ca4ae" stroke-width="2" d="M1 1q4 3 9 2t9-2q-4 9 0 18-9-4-18 0Q5 10 1 1z"/><path fill="#fff" stroke="#111" d="M6 2v13l3-3 3 6 2.500-1.500-2.500-5h4z"/></symbol>
  <symbol id="d-pick2" viewBox="0 0 20 20"><path fill="#d8eef0" stroke="#5ca4ae" stroke-width="2" d="M1 1q4 3 9 2v15q-5-2-9 1 4-9 0-18z"/><use href="#d-shank"/></symbol>
  <symbol id="d-fit" viewBox="0 0 20 20"><path fill="#fff" stroke="#000" stroke-width="1.800" d="M1.500 1.500h17v17h-17z"/><path fill="#5858c8" d="M2.500 2.500h15v1.500h-15z"/><path stroke="#000" stroke-width="2" d="M6 7l8 8M14 7l-8 8"/><path fill="#000" d="M5 6h4L5 10zM15 6v4l-4-4zM5 16v-4l4 4zM15 16h-4l4-4z"/></symbol>
  <symbol id="d-drills" viewBox="0 0 20 20"><path fill="#f6ead0" stroke="#111" d="M1 1h9v17H1zM10 3h9v16h-9z"/><path fill="none" stroke="#222" stroke-width="1.200" d="M1 3l5 6-4 9M6 1l4 6-4 11M10 5l5 6-4 8M15 3l4 6-4 10"/><path fill="none" stroke="#c88c2c" d="M3 1l6 7M12 3l6 7M14 19l4-6"/><path stroke="#39a0c0" stroke-width="1.500" d="M4 9l2 5M14 9l2 5"/></symbol>
  <symbol id="d-addlib" viewBox="0 0 20 20"><path fill="#d8b848" stroke="#3c300c" d="M1 1h6v18H1z"/><path fill="#2f7c5c" stroke="#123" d="M7 2h6v17H7z"/><path fill="#b8c8e8" stroke="#345" d="M13 1h6v18h-6z"/><path fill="#8ce8e0" stroke="#145c60" stroke-width=".8" d="M8.500 3h3v5h5v3h-5v5h-3v-5h-5V8h5z"/></symbol>
  <symbol id="i-arrow" viewBox="0 0 8 8"><path fill="#000" d="M0 2h8L4 6z"/></symbol>
</svg>

<!-- title bar -->
<header class="flex h-[29px] shrink-0 items-center bg-linear-to-b from-[#c3d0de] to-[#d3e0ed] pt-1 pr-[10px] pl-[9px]">
  <svg class="size-4"><use href="#i-p"/></svg>
  <h1 class="ml-1 leading-5 whitespace-pre text-[#3d444c]">Autodesk PowerMill Ultimate 2017      [  * 无 ]</h1>
  <div class="ml-auto flex gap-[3px]">
    <button aria-label="最小化" class="flex h-[17px] w-[30px] items-center justify-center rounded-sm border border-[#8593a3] bg-[#dae5f0]"><svg class="h-3 w-3" viewBox="0 0 12 12"><path fill="#fff" stroke="#4b5560" d="M1.500 6.500h9v3h-9z"/></svg></button>
    <button aria-label="还原" class="flex h-[17px] w-[31px] items-center justify-center rounded-sm border border-[#8593a3] bg-[#dae5f0]"><svg class="h-3 w-3" viewBox="0 0 12 12"><path fill="#fff" stroke="#4b5560" stroke-width="1.200" d="M1.500 1.500h9v8h-9zM4.500 4.500h3v2h-3z"/></svg></button>
    <button aria-label="关闭窗口" class="flex h-[17px] w-[31px] items-center justify-center rounded-sm border border-[#8593a3] bg-[#dae5f0]"><svg class="h-3 w-3" viewBox="0 0 12 12"><path stroke="#4b5560" stroke-width="3.600" d="M2 2l8 7M10 2L2 9"/><path stroke="#fff" stroke-width="1.600" d="M2 2l8 7M10 2L2 9"/></svg></button>
  </div>
</header>

<div class="mx-[7px] mb-1 flex min-h-0 flex-1 flex-col border-b border-[#a9aeb8] bg-[#efefef]">
  <nav class="flex h-[21px] shrink-0 items-center gap-[14px] border-b border-[#b8bcc8] bg-linear-to-b from-[#fafbfe] to-[#d5daea] px-[7px] text-[#6b6e76]">
    <a href="#file">文件(F)</a><a href="#view">查看(V)</a><a href="#insert">插入(I)</a><a href="#show">显示(D)</a><a href="#tools">工具(T)</a><a href="#help">帮助(H)</a>
  </nav>

  <!-- toolbar 1 -->
  <div class="flex h-[31px] w-[765px] shrink-0 items-center border-r border-b border-[#a2a2a2] pl-[2px]">
    <button aria-label="打开" class="flex w-[25px] justify-center"><svg class="size-5"><use href="#i-open"/></svg></button>
    <button aria-label="保存" class="flex w-[25px] justify-center"><svg class="size-5"><use href="#i-save"/></svg></button>
    <span class="mr-[5px] ml-1 h-6 w-px bg-[#8e8e8e]"></span>
    <button aria-label="打印" class="flex w-[25px] justify-center"><svg class="size-5"><use href="#i-print"/></svg></button>
    <span class="mr-[5px] ml-1 h-6 w-px bg-[#8e8e8e]"></span>
    <button aria-label="毛坯" class="flex w-[25px] justify-center"><svg class="size-5"><use href="#i-block"/></svg></button>
    <button aria-label="快进高度" class="flex w-[25px] justify-center"><svg class="size-5"><use href="#i-rapid"/></svg></button>
    <button aria-label="进给率" class="flex w-[25px] justify-center"><svg class="size-5"><use href="#i-feed"/></svg></button>
    <button aria-label="开始点" class="flex w-[25px] justify-center"><svg class="size-5"><use href="#i-point"/></svg></button>
    <button aria-label="切入切出" class="flex w-[25px] justify-center"><svg class="size-5"><use href="#i-lead"/></svg></button>
    <button aria-label="刀轴" class="flex w-[25px] justify-center"><svg class="size-5"><use href="#i-axis"/></svg></button>
    <button aria-label="点分布" class="flex w-[25px] justify-center"><svg class="size-5"><use href="#i-chain"/></svg></button>
    <button aria-label="刀具计算" class="flex w-[25px] justify-center"><svg class="size-5"><use href="#i-feedcalc"/></svg></button>
    <span class="mr-[5px] ml-1 h-6 w-px bg-[#8e8e8e]"></span>
    <button aria-label="碰撞" class="flex w-[25px] justify-center"><svg class="size-5"><use href="#i-collide"/></svg></button>
    <span class="mr-[5px] ml-1 h-6 w-px bg-[#8e8e8e]"></span>
    <button aria-label="刀具路径策略" class="flex w-[25px] justify-center"><svg class="size-5"><use href="#i-path"/></svg></button>
    <div class="relative ml-1 flex h-[25px] w-[192px] items-center rounded-sm bg-white">
      <svg class="absolute left-[2px] size-5"><use href="#i-raster"/></svg>
      <select aria-label="策略" class="h-[21px] w-[172px] appearance-none bg-[#efefef] pl-[25px]"><option>平行精加工</option></select>
      <svg class="pointer-events-none absolute right-[5px] size-2"><use href="#i-arrow"/></svg>
    </div>
    <span class="mr-[6px] ml-[5px] h-6 w-px bg-[#8e8e8e]"></span>
    <button aria-label="碰撞检查" class="flex w-[25px] justify-center"><svg class="size-5"><use href="#i-boom"/></svg></button>
    <button aria-label="机床检查" class="flex w-[25px] justify-center"><svg class="size-5"><use href="#i-machok"/></svg></button>
    <button aria-label="计算器" class="flex w-[25px] justify-center"><svg class="size-5"><use href="#i-calc"/></svg></button>
    <button aria-label="测量" class="flex w-[25px] justify-center"><svg class="size-5"><use href="#i-ruler"/></svg></button>
    <span class="mr-[5px] ml-1 h-6 w-px bg-[#8e8e8e]"></span>
    <button aria-label="变换" class="flex w-[25px] justify-center"><svg class="size-5"><use href="#i-cross"/></svg></button>
    <span class="mr-[5px] ml-1 h-6 w-px bg-[#8e8e8e]"></span>
    <button aria-label="镜像" class="flex w-[25px] justify-center"><svg class="size-5"><use href="#i-mirror"/></svg></button>
    <button aria-label="关闭工具栏" class="ml-px"><svg class="size-[14px]"><use href="#i-x"/></svg></button>
  </div>

  <!-- toolbar 2 -->
  <div class="flex h-[31px] w-[728px] shrink-0 items-center border-r border-b border-[#a2a2a2] pl-[2px]">
    <button aria-label="刀具路径" class="flex w-[25px] justify-center"><svg class="size-5"><use href="#i-path"/></svg></button>
    <div class="relative ml-2 flex w-[122px] items-center">
      <select aria-label="刀具路径列表" class="h-[22px] w-full appearance-none border border-[#dadada] bg-linear-to-b from-[#f2f2f2] to-[#dcdcdc] pl-1"><option></option></select>
      <svg class="pointer-events-none absolute right-[3px] size-2"><use href="#i-arrow"/></svg>
    </div>
    <button aria-label="刀具" class="ml-[11px] flex w-[25px] justify-center"><svg class="size-5"><use href="#i-tools3"/></svg></button>
    <div class="relative ml-[2px] flex w-[122px] items-center">
      <select aria-label="刀具列表" class="h-[22px] w-full appearance-none border border-[#dadada] bg-linear-to-b from-[#f2f2f2] to-[#dcdcdc] pl-[2px]"><option>E21R0.8-L80</option></select>
      <svg class="pointer-events-none absolute right-[3px] size-2"><use href="#i-arrow"/></svg>
    </div>
    <button aria-label="显示刀具" class="ml-[11px] flex w-[25px] justify-center"><svg class="size-[18px]"><use href="#i-bulb"/></svg></button>
    <span class="mr-2 ml-1 h-6 w-px bg-[#8e8e8e]"></span>
    <button aria-label="原点" class="flex h-[25px] w-[45px] items-center justify-between rounded-sm bg-white pr-1 pl-1"><svg class="size-5"><use href="#i-one"/></svg><svg class="size-2"><use href="#i-arrow"/></svg></button>
    <button aria-label="到开始" class="ml-1 flex w-6 justify-center"><svg class="size-5"><use href="#i-first"/></svg></button>
    <button aria-label="后退" class="flex w-6 justify-center"><svg class="size-5"><use href="#i-prev"/></svg></button>
    <button aria-label="播放" class="ml-1 flex w-6 justify-center"><svg class="size-5"><use href="#i-play"/></svg></button>
    <button aria-label="前进" class="flex w-6 justify-center"><svg class="size-5"><use href="#i-next"/></svg></button>
    <button aria-label="到末尾" class="flex w-6 justify-center"><svg class="size-5"><use href="#i-last"/></svg></button>
    <div class="relative ml-2 flex h-[22px] w-[72px] items-center">
      <span class="h-px w-full bg-[#a5a5a5]"></span>
      <span class="absolute left-0 h-5 w-[10px] rounded-sm border border-[#8b8b8b] bg-linear-to-b from-white to-[#d5d5d5]"></span>
      <input type="range" aria-label="速度" value="0" class="absolute inset-0 w-full opacity-0">
    </div>
    <span class="mr-[6px] ml-[25px] h-6 w-px bg-[#8e8e8e]"></span>
    <button aria-label="问题列表" class="flex w-[25px] justify-center"><svg class="size-5"><use href="#i-listmach"/></svg></button>
    <button aria-label="停止" class="flex size-6 items-center justify-center rounded-sm border border-[#666] bg-[#d9d9d9]"><svg class="size-5"><use href="#i-boommach"/></svg></button>
    <button aria-label="关闭工具栏" class="ml-[10px]"><svg class="size-[14px]"><use href="#i-x"/></svg></button>
  </div>

  <!-- toolbar 3 -->
  <div class="flex h-[31px] shrink-0 items-center border-b border-[#8c8c8c]">
   <div class="flex h-full w-[497px] items-center border-r border-[#a2a2a2] pl-[2px]">
    <button aria-label="控制" class="flex w-[25px] justify-center"><svg class="size-5"><use href="#i-ctl"/></svg></button>
    <button aria-label="刀具控制" class="flex w-[25px] justify-center"><svg class="size-5"><use href="#i-ctltool"/></svg></button>
    <button aria-label="打开机床" class="ml-[10px] flex w-[25px] justify-center"><svg class="size-5"><use href="#i-open"/></svg></button>
    <div class="relative ml-[2px] flex w-[120px] items-center">
      <select aria-label="机床列表" class="h-[22px] w-full appearance-none border border-[#dadada] bg-linear-to-b from-[#f2f2f2] to-[#dcdcdc] pl-px"><option>DynaMILL-SP15</option></select>
      <svg class="pointer-events-none absolute right-[3px] size-2"><use href="#i-arrow"/></svg>
    </div>
    <button aria-label="显示机床" class="ml-[2px] flex w-[25px] justify-center"><svg class="size-[18px]"><use href="#i-bulb"/></svg></button>
    <span class="mr-[6px] ml-1 h-6 w-px bg-[#8e8e8e]"></span>
    <button aria-label="机床" class="flex w-[25px] justify-center"><svg class="size-5"><use href="#i-mach2"/></svg></button>
    <span class="mr-[5px] ml-1 h-6 w-px bg-[#8e8e8e]"></span>
    <button aria-label="坐标系" class="flex w-[25px] justify-center"><svg class="size-5"><use href="#i-wpbox"/></svg></button>
    <div class="relative ml-[2px] flex w-[123px] items-center">
      <select aria-label="坐标系列表" class="h-[22px] w-full appearance-none border border-[#dadada] bg-linear-to-b from-[#f2f2f2] to-[#dcdcdc] pl-1"><option></option></select>
      <svg class="pointer-events-none absolute right-1 size-2"><use href="#i-arrow"/></svg>
    </div>
    <span class="mr-[5px] ml-[6px] h-6 w-px bg-[#8e8e8e]"></span>
    <button aria-label="旋转刀具" class="flex w-[25px] justify-center"><svg class="size-5"><use href="#i-rot"/></svg></button>
    <button aria-label="关闭工具栏" class="ml-[9px]"><svg class="size-[14px]"><use href="#i-x"/></svg></button>
   </div>
  </div>

  <!-- work area -->
  <div class="flex min-h-0 flex-1">
    <aside class="flex w-[262px] shrink-0 flex-col pt-[2px] pr-[9px] pb-[2px] pl-[3px]">
      <div class="flex h-4 items-center gap-1">
        <span class="h-[6px] flex-1 border-y border-[#a3a8ae]"></span>
        <button aria-label="浮动"><svg class="size-3" viewBox="0 0 12 12"><path fill="#eaf0f6" stroke="#6a88a4" stroke-width="1.300" d="M4 1h7v5H4zM1 5h7v6H1z"/></svg></button>
        <button aria-label="关闭面板"><svg class="size-3"><use href="#i-x"/></svg></button>
      </div>
      <div class="flex min-h-0 flex-1 flex-col border-t border-l border-[#7f7f7f] bg-[#efefef]">
        <div class="flex h-[37px] shrink-0 items-end border-b border-[#999] pl-[2px]" role="tablist">
          <button role="tab" aria-label="浏览器" class="mb-[-1px] flex h-[35px] w-[41px] items-center justify-center border border-b-0 border-[#909090] bg-white"><svg class="size-[22px]"><use href="#i-tree"/></svg></button>
          <button role="tab" aria-label="网络" class="flex h-[31px] w-[33px] items-center justify-center border border-b-0 border-l-0 border-[#909090] bg-linear-to-b from-[#f4f4f4] to-[#d4d4d4]"><svg class="size-[22px]"><use href="#i-globe"/></svg></button>
          <button role="tab" aria-label="回收站" class="flex h-[31px] w-[34px] items-center justify-center border border-b-0 border-l-0 border-[#909090] bg-linear-to-b from-[#f4f4f4] to-[#d4d4d4]"><svg class="size-[22px]"><use href="#i-bin"/></svg></button>
        </div>
        <div class="mt-[2px] min-h-0 flex-1 overflow-hidden border-t border-[#999] bg-white pl-[2px] whitespace-nowrap">
          <ul class="leading-5" role="tree">
            <li class="flex h-5 items-center"><svg class="size-5 shrink-0"><use href="#t-plus"/></svg><svg class="size-4"><use href="#i-active"/></svg><span class="ml-[5px]">激活</span></li>
            <li class="flex h-5 items-center"><svg class="size-5 shrink-0"><use href="#t-plus"/></svg><svg class="size-4"><use href="#i-machine"/></svg><b class="ml-[5px]">机床</b></li>
            <li class="flex h-5 items-center"><svg class="size-5 shrink-0"><use href="#t-t"/></svg><svg class="size-4"><use href="#i-nc"/></svg><span class="ml-[5px]">NC程序</span></li>
            <li class="flex h-5 items-center"><svg class="size-5 shrink-0"><use href="#t-minus"/></svg><svg class="size-4"><use href="#i-path"/></svg><b class="ml-[5px]">刀具路径</b></li>
            <li class="flex h-5 items-center"><svg class="size-5"><use href="#t-v"/></svg><svg class="-ml-px size-5"><use href="#t-plus"/></svg><svg class="size-4"><use href="#i-check"/></svg><svg class="size-4"><use href="#i-bulbsm"/></svg><svg class="size-4"><use href="#i-layers"/></svg><span class="ml-[5px]">1</span></li>
            <li class="flex h-5 items-center"><svg class="size-5"><use href="#t-v"/></svg><svg class="-ml-px size-5"><use href="#t-plus"/></svg><svg class="size-4"><use href="#i-check"/></svg><svg class="size-4"><use href="#i-bulbsm"/></svg><svg class="size-4"><use href="#i-layers2"/></svg><span class="ml-[5px]">2</span></li>
            <li class="flex h-5 items-center"><svg class="size-5"><use href="#t-v"/></svg><svg class="-ml-px size-5"><use href="#t-plus"/></svg><svg class="size-4"><use href="#i-q"/></svg><svg class="size-4"><use href="#i-pda"/></svg><svg class="size-4"><use href="#i-db"/></svg><span class="ml-[5px] flex gap-1">&gt; <b>3</b></span></li>
            <li class="flex h-5 items-center"><svg class="size-5 shrink-0"><use href="#t-minus"/></svg><svg class="size-4"><use href="#i-tools3"/></svg><b class="ml-[5px] bg-[#efefef]">刀具</b></li>
            <li class="flex h-5 items-center"><svg class="size-5 shrink-0"><use href="#t-v"/></svg><svg class="-ml-px size-5 shrink-0"><use href="#t-plus"/></svg><svg class="size-4 shrink-0"><use href="#i-folder"/></svg><span class="ml-[9px]">Flat Cutter R-BT50</span></li>
            <li class="flex h-5 items-center"><svg class="size-5 shrink-0"><use href="#t-v"/></svg><svg class="-ml-px size-5 shrink-0"><use href="#t-plus"/></svg><svg class="size-4 shrink-0"><use href="#i-folder"/></svg><span class="ml-[9px]">Flat cutter-BT50</span></li>
            <li class="flex h-5 items-center"><svg class="size-5 shrink-0"><use href="#t-v"/></svg><svg class="-ml-px size-5 shrink-0"><use href="#t-plus"/></svg><svg class="size-4 shrink-0"><use href="#i-folder"/></svg><span class="ml-[9px]">BALL Cutter-BT50</span></li>
            <li class="flex h-5 items-center"><svg class="size-5 shrink-0"><use href="#t-v"/></svg><svg class="-ml-px size-5 shrink-0"><use href="#t-plus"/></svg><svg class="size-4 shrink-0"><use href="#i-folder"/></svg><span class="ml-[9px]">MZ-DILL-BT50(根据深度调整刀长</span></li>
            <li class="flex h-5 items-center"><svg class="size-5 shrink-0"><use href="#t-v"/></svg><svg class="-ml-px size-5 shrink-0"><use href="#t-plus"/></svg><svg class="size-4 shrink-0"><use href="#i-folder"/></svg><span class="ml-[9px] whitespace-pre">中心钻-BT50 ( 优先选用ZXZ-10  )</span></li>
            <li class="flex h-5 items-center"><svg class="size-5"><use href="#t-v"/></svg><svg class="-ml-px size-5"><use href="#t-plus"/></svg><span class="w-4"></span><svg class="size-4"><use href="#i-bulbon"/></svg><svg class="size-4"><use href="#i-disc"/></svg><span class="ml-[5px] flex gap-1">&gt; <b>1</b></span></li>
            <li class="flex h-5 items-center"><svg class="size-5 shrink-0"><use href="#t-t"/></svg><svg class="size-4"><use href="#i-bound"/></svg><span class="ml-[5px]">边界</span></li>
            <li class="flex h-5 items-center"><svg class="size-5 shrink-0"><use href="#t-t"/></svg><svg class="size-4"><use href="#i-pattern"/></svg><span class="ml-[5px]">参考线</span></li>
            <li class="flex h-5 items-center"><svg class="size-5 shrink-0"><use href="#t-t"/></svg><svg class="size-4"><use href="#i-hole"/></svg><span class="ml-[5px]">孔特征设置</span></li>
            <li class="flex h-5 items-center"><svg class="size-5 shrink-0"><use href="#t-t"/></svg><svg class="size-4"><use href="#i-feat"/></svg><span class="ml-[5px]">特征组</span></li>
            <li class="flex h-5 items-center"><svg class="size-5 shrink-0"><use href="#t-minus"/></svg><svg class="size-4"><use href="#i-wps"/></svg><span class="ml-[5px]">用户坐标系</span></li>
            <li class="flex h-5 items-center"><svg class="size-5"><use href="#t-v"/></svg><svg class="-ml-px size-5"><use href="#t-t"/></svg><span class="w-4"></span><svg class="size-4"><use href="#i-sun"/></svg><svg class="size-4"><use href="#i-wp"/></svg><span class="ml-[5px]">post</span></li>
            <li class="flex h-5 items-center"><svg class="size-5"><use href="#t-v"/></svg><svg class="-ml-px size-5"><use href="#t-l"/></svg><span class="w-4"></span><svg class="size-4"><use href="#i-bulbsm"/></svg><svg class="size-4"><use href="#i-wp"/></svg><span class="ml-[5px]">1</span></li>
            <li class="flex h-5 items-center"><svg class="size-5 shrink-0"><use href="#t-plus"/></svg><svg class="size-4"><use href="#i-levels"/></svg><span class="ml-[5px]">层和组合</span></li>
            <li class="flex h-5 items-center"><svg class="size-5 shrink-0"><use href="#t-plus"/></svg><svg class="size-4"><use href="#i-model"/></svg><span class="ml-[5px]">模型</span></li>
            <li class="flex h-5 items-center"><svg class="size-5 shrink-0"><use href="#t-minus"/></svg><svg class="size-4"><use href="#i-stock"/></svg><b class="ml-[5px]">残留模型</b></li>
            <li class="flex h-5 items-center"><svg class="size-5"><use href="#t-v"/></svg><svg class="-ml-px size-5"><use href="#t-plus"/></svg><span class="w-4"></span><svg class="size-4"><use href="#i-sun"/></svg><svg class="size-4"><use href="#i-stock"/></svg><span class="ml-[5px] flex gap-1">&gt; <b>1</b></span></li>
            <li class="flex h-5 items-center"><svg class="size-5 shrink-0"><use href="#t-t"/></svg><svg class="size-4"><use href="#i-group"/></svg><span class="ml-[5px]">组</span></li>
            <li class="flex h-5 items-center"><svg class="size-5 shrink-0"><use href="#t-plus"/></svg><svg class="size-4"><use href="#i-macro"/></svg><span class="ml-[5px]">宏</span></li>
          </ul>
        </div>
        <div class="flex h-4 shrink-0 items-center">
          <button aria-label="向左" class="flex w-[18px] justify-center"><svg class="size-[6px]" viewBox="0 0 6 6"><path fill="#444" d="M5 0v6L1 3z"/></svg></button>
          <span class="flex h-[14px] w-[208px] items-center justify-center gap-[2px] rounded-xs border border-[#979797] bg-linear-to-b from-[#f5f5f5] to-[#cfcfcf]"><i class="h-[6px] w-px bg-[#555]"></i><i class="h-[6px] w-px bg-[#555]"></i><i class="h-[6px] w-px bg-[#555]"></i></span>
          <button aria-label="向右" class="ml-auto flex w-5 justify-center"><svg class="size-[6px]" viewBox="0 0 6 6"><path fill="#444" d="M1 0v6l4-3z"/></svg></button>
        </div>
      </div>
    </aside>

    <!-- 3D view -->
    <main class="min-w-0 flex-1 overflow-hidden border-l border-[#7a7a7a] bg-[#2b4758]">
      <svg class="h-full w-full" viewBox="271 144 804 644" preserveAspectRatio="xMinYMin slice" role="img" aria-label="模型视图">
        <defs>
          <pattern id="pink" width="8" height="8" patternUnits="userSpaceOnUse"><path fill="#cd84cc" d="M0 0h8v8H0z"/><path shape-rendering="crispEdges" stroke="#4d5f55" d="M0 .5h2M5 .5h1M2 1.500h3M7 1.500h1M0 2.500h2M4 2.500h1M6 2.500h1M2 3.500h3M6 3.500h2M0 4.500h1M4 4.500h2M1 5.500h3M6 5.500h2M0 6.500h1M3 6.500h3M1 7.500h2M5 7.500h3"/></pattern>
          <pattern id="dark" width="8" height="16" patternUnits="userSpaceOnUse"><path fill="#242126" d="M0 0h8v16H0z"/><path stroke="#0a4010" stroke-width="1.800" d="M4 0L1 16M12 0L9 16M-4 0L-7 16"/><path stroke="#80597f" stroke-dasharray="5 3" d="M8 0L5 16M0 0L-3 16"/></pattern>
          <linearGradient id="teal" x1="0" y1="0" x2="0" y2="1"><stop offset="0" stop-color="#27404f"/><stop offset="1" stop-color="#35576b"/></linearGradient>
        </defs>
        <path fill="url(#pink)" d="M271 144h804v644H271z"/>
        <path fill="url(#teal)" d="M271 144h57l-57 88zM908 144h167v84z"/>
        <path fill="none" stroke="#111" d="M908 144l167 84M271 232l57-88"/>
        <path fill="url(#dark)" stroke="#000" d="M850 286l48 23q20-8 40-7l9 4 128 63v111l-147-72-78-38z"/>
        <path fill="#7a4a80" opacity=".3" d="M898 311q20-8 40-8l7 4-14 99-40-14z"/>
        <path fill="none" stroke="#000" d="M898 309l-2 30M946 306l-2 30"/>
        <path fill="none" stroke="#000" stroke-dasharray="3 3" d="M858 322l38 17q25-12 50-4"/>
        <path fill="#147a1c" d="M850 370l75 36-25-2-12 11-38-18z"/>
        <path fill="none" stroke="#0a4a10" opacity=".5" d="M862 378l6 24M870 382l6 24M878 386l6 24M886 390l4 20"/>
        <path fill="none" stroke="#2a2030" d="M565 682l75 43 97 63"/>
        <path fill="url(#dark)" stroke="#000" d="M270 677l102 50 53 25 55 36H270z"/>
        <path fill="#5b1e66" stroke="#200828" stroke-dasharray="3 2" d="M310 500q-18 22 0 45z"/>
        <!-- tool holder wireframe -->
        <g fill="none" stroke="#1c2440" stroke-width="1.200">
          <path d="M303 590q-18 12-20 44l-6 50M303 596q-20 22-14 40t20 24M286 612l17 4M283 634l24-4M282 678l4-62M289 682l2-50M295 684l-1-44M303 660q-14 8-22 24M375 683l-4 50M368 683l-3 50M320 684v30M330 684v26M345 684l-2 40"/>
        </g>
        <g fill="none" stroke="#e8dc38" stroke-width="1.300" stroke-dasharray="6 2">
          <path d="M300 684q-26 12-28 46t18 46q28 16 56 2 26-14 24-52t-30-42"/>
          <path d="M272 712l50 14 46 28M275 742l47-16 42-26M335 684l-28 96M329 684l-18 76M275 734l10 32M322 724l32 40v20M276 736l46 12 46 6M322 764q20-6 30 10M290 700l30 26"/>
        </g>
        <g fill="none" stroke="#2cc83c" stroke-width="1.300">
          <path d="M300 684q-8 34 0 56M322 722l-26-30M322 722l28-16q6-12 0-26M322 722l-44 14M322 722l26 24M322 722l-4 42M322 722l46-6M322 722l-44-14M310 690l36 50M345 740q-6 10 0 20"/>
        </g>
        <path fill="none" stroke="#fff" stroke-width="1.600" d="M296 765l18 8"/><path fill="#fff" d="M313 769l7 6-9 1z"/>
        <path fill="none" stroke="#3cd8e8" stroke-width="2" d="M296 765l4-14"/>
        <text x="317" y="773" fill="#fff" class="text-[12px]" font-weight="bold">X</text>
        <text x="308" y="748" fill="#c8c8c8" class="text-[12px]">Y</text>
        <text x="299" y="751" fill="#3cd8e8" class="text-[12px]" font-weight="bold">Z</text>
        <!-- view cube -->
        <g stroke="#8d9aa0" stroke-width=".6">
          <path fill="#a9b4ba" fill-opacity=".85" d="M1017 163l35 15-12 33-44-19z"/>
          <path fill="#c0b2c2" fill-opacity=".85" d="M996 192l44 19-8 17-34-18z"/>
          <path fill="#87959c" fill-opacity=".85" d="M1052 178l-2 22-18 28 8-17z"/>
        </g>
        <text transform="rotate(24 1020 190)" x="1013" y="194" fill="#56636b" class="text-[17px]">上</text>
        <text transform="rotate(26 1001 208)" x="1004" y="208" fill="#6d6472" class="text-[9px]" font-weight="bold">前视</text>
      </svg>
    </main>

    <!-- view toolbar -->
    <div class="flex w-[31px] shrink-0 flex-col">
      <div class="flex h-[403px] flex-col items-center gap-1 border-b border-[#a2a2a2] pt-[6px]">
        <button aria-label="机床视图"><svg class="size-5"><use href="#i-machine"/></svg></button>
        <button aria-label="顶视图" class="relative"><svg class="size-5"><use href="#v-top"/></svg><i class="absolute -right-1 -bottom-px border-b-[5px] border-l-[5px] border-l-transparent border-b-black"></i></button>
        <button aria-label="右视图" class="relative"><svg class="size-5"><use href="#v-right"/></svg><i class="absolute -right-1 -bottom-px border-b-[5px] border-l-[5px] border-l-transparent border-b-black"></i></button>
        <button aria-label="前视图" class="relative"><svg class="size-5"><use href="#v-front"/></svg><i class="absolute -right-1 -bottom-px border-b-[5px] border-l-[5px] border-l-transparent border-b-black"></i></button>
        <button aria-label="等轴视图" class="relative"><svg class="size-5"><use href="#v-iso"/></svg><i class="absolute -right-1 -bottom-px border-b-[5px] border-l-[5px] border-l-transparent border-b-black"></i></button>
        <button aria-label="上一视图"><svg class="size-5"><use href="#v-last"/></svg></button>
        <button aria-label="刷新"><svg class="size-5"><use href="#v-refresh"/></svg></button>
        <button aria-label="全部显示" class="relative"><svg class="size-5"><use href="#v-fit"/></svg><i class="absolute -right-1 -bottom-px border-b-[5px] border-l-[5px] border-l-transparent border-b-black"></i></button>
        <button aria-label="框选缩放"><svg class="size-5"><use href="#v-box"/></svg></button>
        <span class="my-px h-px w-6 bg-[#999]"></span>
        <button aria-label="毛坯"><svg class="size-5"><use href="#i-block"/></svg></button>
        <span class="my-[2px] h-px w-6 bg-[#999]"></span>
        <button aria-label="阴影" class="relative flex h-[22px] w-6 items-center justify-center rounded-sm border border-[#666] bg-[#d5d5d5]"><svg class="size-[18px]"><use href="#v-shade"/></svg><i class="absolute right-0 bottom-0 border-b-[5px] border-l-[5px] border-l-transparent border-b-black"></i></button>
        <button aria-label="线框"><svg class="size-[18px]"><use href="#v-wire"/></svg></button>
        <span class="mt-[9px] mb-1 h-px w-6 bg-[#999]"></span>
        <button aria-label="选择" class="relative"><svg class="size-5"><use href="#v-sel"/></svg><i class="absolute -right-px bottom-0 border-b-[5px] border-l-[5px] border-l-transparent border-b-black"></i></button>
        <button aria-label="撤销选择" class="mt-1"><svg class="size-5"><use href="#v-undo"/></svg></button>
        <button aria-label="关闭工具栏" class="mt-2 mr-2"><svg class="size-[14px]"><use href="#i-x"/></svg></button>
      </div>
    </div>
  </div>

  <!-- bottom toolbar -->
  <div class="flex h-8 shrink-0 items-center border-t border-[#b5b5b5]">
   <div class="flex h-full w-[826px] items-center border-r border-b border-[#a2a2a2] pl-[3px]">
    <div class="relative flex w-[121px] items-center">
      <select aria-label="残留模型列表" class="h-[22px] w-full appearance-none border border-[#dadada] bg-linear-to-b from-[#f2f2f2] to-[#dcdcdc] pl-[2px]"><option>3</option></select>
      <svg class="pointer-events-none absolute right-[3px] size-2"><use href="#i-arrow"/></svg>
    </div>
    <button aria-label="残留模型" class="ml-[2px] flex w-[25px] justify-center"><svg class="size-5"><use href="#b-stock"/></svg></button>
    <span class="mr-1 ml-1 h-6 w-px bg-[#8e8e8e]"></span>
    <button aria-label="变换" class="flex w-[25px] justify-center"><svg class="size-5"><use href="#b-move"/></svg></button>
    <button aria-label="分割" class="flex w-[25px] justify-center"><svg class="size-5"><use href="#b-wave"/></svg></button>
    <button aria-label="剪裁" class="flex w-[25px] justify-center"><svg class="size-5"><use href="#b-cut"/></svg></button>
    <button aria-label="重排" class="flex w-[25px] justify-center"><svg class="size-5"><use href="#b-reorder"/></svg></button>
    <button aria-label="移动" class="flex w-[25px] justify-center"><svg class="size-5"><use href="#b-transf"/></svg></button>
    <button aria-label="旋转" class="flex w-[25px] justify-center"><svg class="size-5"><use href="#i-rot"/></svg></button>
    <button aria-label="替换" class="flex w-[25px] justify-center"><svg class="size-5"><use href="#b-swap"/></svg></button>
    <button aria-label="列表" class="flex w-[25px] justify-center"><svg class="size-5"><use href="#b-table"/></svg></button>
    <button aria-label="复制" class="flex w-[25px] justify-center"><svg class="size-5"><use href="#b-copy"/></svg></button>
    <button aria-label="统计" class="flex w-[25px] justify-center"><svg class="size-5"><use href="#b-clock"/></svg></button>
    <button aria-label="删除" class="flex w-[25px] justify-center"><svg class="size-5"><use href="#b-del"/></svg></button>
    <span class="mr-[6px] ml-1 h-6 w-px bg-[#8e8e8e]"></span>
    <div class="flex gap-px">
      <button aria-label="显示路径" class="flex size-6 items-center justify-center rounded-sm border border-[#666] bg-[#d9d9d9]"><svg class="size-5"><use href="#b-l1"/></svg></button>
      <button aria-label="显示连接" class="flex size-6 items-center justify-center rounded-sm border border-[#666] bg-[#d9d9d9]"><svg class="size-5"><use href="#b-l2"/></svg></button>
      <button aria-label="显示切入" class="flex size-6 items-center justify-center rounded-sm border border-[#666] bg-[#d9d9d9]"><svg class="size-5"><use href="#b-l3"/></svg></button>
    </div>
    <button aria-label="显示点" class="flex w-[25px] justify-center"><svg class="size-5"><use href="#b-sq"/></svg></button>
    <button aria-label="显示序列" class="flex w-[25px] justify-center"><svg class="size-5"><use href="#b-gchain"/></svg></button>
    <button aria-label="显示刀轴" class="flex w-[25px] justify-center"><svg class="size-5"><use href="#i-axis"/></svg></button>
    <button aria-label="接触点" class="flex w-[25px] justify-center"><svg class="size-5"><use href="#b-pts"/></svg></button>
    <button aria-label="进给" class="flex w-[25px] justify-center"><svg class="size-5"><use href="#b-green"/></svg></button>
    <button aria-label="上层" class="flex w-[25px] justify-center"><svg class="size-5"><use href="#b-red"/></svg></button>
    <button aria-label="下层" class="flex w-[25px] justify-center"><svg class="size-5"><use href="#b-blue"/></svg></button>
    <span class="mr-[5px] ml-[5px] h-6 w-px bg-[#8e8e8e]"></span>
    <button aria-label="查找" class="flex w-[25px] justify-center"><svg class="size-5"><use href="#b-find"/></svg></button>
    <button aria-label="主轴" class="flex w-[25px] justify-center"><svg class="size-5"><use href="#b-gray"/></svg></button>
    <button aria-label="刀尖" class="flex w-[25px] justify-center"><svg class="size-5"><use href="#b-tip"/></svg></button>
    <button aria-label="图表" class="flex w-[25px] justify-center"><svg class="size-5"><use href="#b-stat"/></svg></button>
    <button aria-label="关闭工具栏"><svg class="size-[14px]"><use href="#i-x"/></svg></button>
   </div>
  </div>
  <footer class="h-[30px] shrink-0 px-[3px] leading-[29px]">当前已选刀具刀柄部件底部直径</footer>
</div>

<!-- tool dialog -->
<section role="dialog" aria-labelledby="dlg-title" class="absolute top-[147px] left-[302px] flex w-[555px] flex-col rounded-t-md border border-[#182838] bg-linear-to-b from-[#a8c4de] to-[#b6d3ec] px-[6px] pb-[6px] shadow-[inset_0_0_0_1px_#cfe6f5]">
  <div class="flex h-7 items-center pt-[2px] pr-px pl-[2px]">
    <svg class="size-4"><use href="#i-p"/></svg>
    <h2 id="dlg-title" class="ml-1">圆角盘铣刀</h2>
    <button aria-label="帮助" class="ml-auto h-[17px] w-[31px] rounded-xs border border-[#5c7894] bg-linear-to-b from-[#c9daec] to-[#a4bfda] leading-[15px] font-bold text-[#33506e]">?</button>
    <button aria-label="关闭对话框" class="ml-[2px] flex h-[17px] w-[31px] items-center justify-center rounded-xs border border-[#5a1a14] bg-linear-to-b from-[#dc9184] to-[#bf3322]"><svg class="size-[10px]" viewBox="0 0 10 10"><path stroke="#5a2a28" stroke-width="3.600" d="M1 1l8 8M9 1L1 9"/><path stroke="#fff" stroke-width="2.200" d="M1 1l8 8M9 1L1 9"/></svg></button>
  </div>
  <div class="bg-[#efefef] pt-[3px] pr-[9px] pb-[7px] pl-[6px]">
    <div role="tablist" class="flex items-end pt-[2px] pl-[2px]">
      <button role="tab" class="h-[22px] w-[46px] border border-b-0 border-[#909090] bg-linear-to-b from-[#f4f4f4] to-[#d6d6d6]">刀尖</button>
      <button role="tab" aria-selected="true" class="relative z-10 -mb-px h-[25px] w-[52px] border border-b-0 border-l-0 border-[#909090] bg-white">刀柄</button>
      <button role="tab" class="h-[22px] w-[46px] border border-b-0 border-l-0 border-[#909090] bg-linear-to-b from-[#f4f4f4] to-[#d6d6d6]">夹持</button>
      <button role="tab" class="h-[22px] w-[60px] border border-b-0 border-l-0 border-[#909090] bg-linear-to-b from-[#f4f4f4] to-[#d6d6d6]">夹持轮廓</button>
      <button role="tab" class="h-[22px] w-[60px] border border-b-0 border-l-0 border-[#909090] bg-linear-to-b from-[#f4f4f4] to-[#d6d6d6]">切削数据</button>
      <button role="tab" class="h-[22px] w-[84px] border border-b-0 border-l-0 border-[#909090] bg-linear-to-b from-[#f4f4f4] to-[#d6d6d6]">用户定义设置</button>
      <button role="tab" class="h-[22px] w-[48px] border border-b-0 border-l-0 border-[#909090] bg-linear-to-b from-[#f4f4f4] to-[#d6d6d6]">描述</button>
    </div>
    <div class="flex h-[435px] gap-[7px] border border-[#8e8e8e] bg-white pt-[6px] pl-2">
      <fieldset class="flex h-[400px] w-[324px] shrink-0 rounded border border-[#dbe2e5]">
        <legend class="ml-1 px-1 leading-[18px]">部件</legend>
        <div class="flex h-full">
          <svg class="h-[345px] w-[140px] shrink-0" viewBox="326 231 140 345" aria-hidden="true">
            <path fill="#dfffe2" stroke="#000" stroke-width="2" d="M352 488h88v66h-88z"/>
            <path fill="none" stroke="#555" stroke-dasharray="10 6 2 6" d="M396.500 229v345"/>
          </svg>
          <div class="flex w-[177px] flex-col">
            <div class="flex items-center gap-[3px]">
              <div class="relative flex w-[124px] items-center">
                <select aria-label="刀柄部件" class="h-[25px] w-full appearance-none rounded-sm border border-[#858585] bg-linear-to-b from-[#f2f2f2] to-[#d6d6d6]"><option></option></select>
                <svg class="pointer-events-none absolute right-1 size-2"><use href="#i-arrow"/></svg>
              </div>
              <button aria-label="选取" class="flex size-6 items-center justify-center rounded-sm border border-[#777] bg-linear-to-b from-[#f6f6f6] to-[#d2d2d2]"><svg class="size-5"><use href="#d-pick"/></svg></button>
              <button aria-label="选取刀柄" class="flex size-6 items-center justify-center rounded-sm border border-[#777] bg-linear-to-b from-[#f6f6f6] to-[#d2d2d2]"><svg class="size-5"><use href="#d-pick2"/></svg></button>
            </div>
            <div class="mt-[15px] flex gap-[2px]">
              <button aria-label="增加部件" class="flex size-6 items-center justify-center rounded-sm border border-[#777] bg-linear-to-b from-[#f6f6f6] to-[#d2d2d2]"><svg class="size-5"><use href="#d-add"/></svg></button>
              <button aria-label="删除部件" class="flex size-6 items-center justify-center rounded-sm border border-[#777] bg-linear-to-b from-[#f6f6f6] to-[#d2d2d2]"><svg class="size-5"><use href="#d-del"/></svg></button>
              <button aria-label="清除刀柄" class="flex size-6 items-center justify-center rounded-sm border border-[#777] bg-linear-to-b from-[#f6f6f6] to-[#d2d2d2]"><svg class="size-5"><use href="#d-clr"/></svg></button>
              <button aria-label="打开刀柄" class="ml-auto flex size-6 items-center justify-center rounded-sm border border-[#777] bg-linear-to-b from-[#f6f6f6] to-[#d2d2d2]"><svg class="size-5"><use href="#i-open"/></svg></button>
              <button aria-label="保存刀柄" class="flex size-6 items-center justify-center rounded-sm border border-[#777] bg-linear-to-b from-[#f6f6f6] to-[#d2d2d2]"><svg class="size-5"><use href="#i-save"/></svg></button>
            </div>
            <fieldset class="mt-1 rounded border border-[#dbe2e5]">
              <legend class="ml-1 px-1 leading-[18px]">尺寸</legend>
              <div class="flex justify-end gap-[5px] pt-[2px] pr-1 pb-3">
                <div class="flex flex-col items-end gap-[10px] leading-5 text-[#1764a8] underline">
                  <label for="d-topdia">顶部直径</label><label for="d-botdia">底部直径</label><label for="d-len">长度</label>
                </div>
                <div class="flex flex-col">
                  <div class="relative flex"><input id="d-topdia" value="20.0" class="h-5 w-[54px] border border-[#5c9dc0] pl-[3px] text-white"><span class="pointer-events-none absolute top-[2px] left-[3px] border-r border-black bg-[#3a94ee] pl-px leading-4 text-white" aria-hidden="true">20.0</span></div>
                  <input id="d-botdia" value="20.0" class="mt-3 h-5 w-[54px] border border-[#d8dee2] border-t-[#a8adb5] pl-[3px]">
                  <input id="d-len" value="15.0" class="mt-2 h-5 w-[54px] border border-[#d8dee2] border-t-[#a8adb5] pl-[3px]">
                </div>
              </div>
            </fieldset>
            <div class="mt-3 flex items-center justify-end gap-[5px] pr-[5px]"><label for="d-cut">切削长度</label><input id="d-cut" readonly value="15.0" class="h-5 w-[54px] border border-[#cfcfcf] border-t-[#a8a8a8] bg-[#efefef] pl-[3px]"></div>
            <div class="mt-[10px] flex items-center justify-end gap-[5px] pr-[5px]"><label for="d-shk">刀柄长度</label><input id="d-shk" readonly value="15.0" class="h-5 w-[54px] border border-[#cfcfcf] border-t-[#a8a8a8] bg-[#efefef] pl-[3px]"></div>
            <fieldset class="mt-[61px] rounded border border-[#dbe2e5]">
              <legend class="ml-1 px-1 leading-[18px]">连接</legend>
              <div class="relative mt-[2px] ml-2 flex w-[122px] items-center">
                <select aria-label="连接" class="h-[25px] w-full appearance-none border border-[#d4d4d4] border-t-[#a8a8a8] bg-white"><option></option></select>
                <svg class="pointer-events-none absolute right-1 size-2"><use href="#i-arrow"/></svg>
              </div>
            </fieldset>
          </div>
        </div>
      </fieldset>
      <div class="w-[179px]">
        <fieldset class="h-[373px] rounded border border-[#dbe2e5]">
          <legend class="ml-1 px-1 leading-[18px]">刀具装配</legend>
          <div class="flex items-center pl-5">
            <svg class="size-4" viewBox="0 0 16 16"><circle cx="6.500" cy="6.500" r="5.500" fill="none" stroke="#222" stroke-width="1.200"/><path stroke="#000" stroke-width="2.200" d="M10.500 10.500l5 5"/></svg>
            <div class="relative ml-[7px] flex w-[66px] items-center">
              <select aria-label="缩放" class="h-[25px] w-full appearance-none border border-[#dcdcdc] bg-white pl-[3px]"><option>100%</option></select>
              <svg class="pointer-events-none absolute right-1 size-2"><use href="#i-arrow"/></svg>
            </div>
            <div class="relative ml-3 flex h-3 w-[44px] items-center">
              <span class="h-px w-full bg-[#a5a5a5]"></span>
              <span class="absolute left-0 h-3 w-[6px] rounded-xs border border-[#8b8b8b] bg-[#f0f0f0]"></span>
              <input type="range" aria-label="缩放滑块" value="0" class="absolute inset-0 w-full opacity-0">
            </div>
          </div>
          <svg class="ml-7 h-[290px] w-[126px]" viewBox="685 256 126 290" aria-hidden="true">
            <path fill="#bfffc1" stroke="#000" stroke-width="2" d="M713 422h69v51h-69z"/>
            <rect x="688" y="473" width="120" height="52" rx="4" fill="#ffff80" stroke="#000" stroke-width="2"/>
            <path fill="none" stroke="#555" stroke-dasharray="10 6 2 6" d="M748.500 257v289"/>
          </svg>
        </fieldset>
        <div class="mt-2 flex gap-[3px]">
          <button aria-label="适合窗口" class="flex size-6 items-center justify-center rounded-sm border border-[#777] bg-linear-to-b from-[#f6f6f6] to-[#d2d2d2]"><svg class="size-5"><use href="#d-fit"/></svg></button>
          <button aria-label="刀具库" class="ml-auto flex size-6 items-center justify-center rounded-sm border border-[#777] bg-linear-to-b from-[#f6f6f6] to-[#d2d2d2]"><svg class="size-5"><use href="#d-drills"/></svg></button>
          <button aria-label="清除装配" class="flex size-6 items-center justify-center rounded-sm border border-[#777] bg-linear-to-b from-[#f6f6f6] to-[#d2d2d2]"><svg class="size-5"><use href="#d-clr"/></svg></button>
          <button aria-label="加入刀具库" class="flex size-6 items-center justify-center rounded-sm border border-[#777] bg-linear-to-b from-[#f6f6f6] to-[#d2d2d2]"><svg class="size-5"><use href="#d-addlib"/></svg></button>
        </div>
      </div>
    </div>
    <div class="mt-2 flex justify-center pl-3"><button class="h-5 w-[73px] rounded-sm border border-[#808080] bg-linear-to-b from-[#f4f4f4] to-[#d4d4d4] leading-[18px]">关闭</button></div>
  </div>
  <!-- click highlight and text cursor -->
  <div class="pointer-events-none absolute top-[198px] left-[288px] flex size-10 items-center justify-center rounded-full bg-[#f06464]/55">
    <svg class="ml-1 h-4 w-2" viewBox="0 0 8 16"><path fill="none" stroke="#333" d="M1 .5h2.500v15H1M6 .5H3.500M6 15.500H3.500"/></svg>
  </div>
</section>
</body>
</html>
